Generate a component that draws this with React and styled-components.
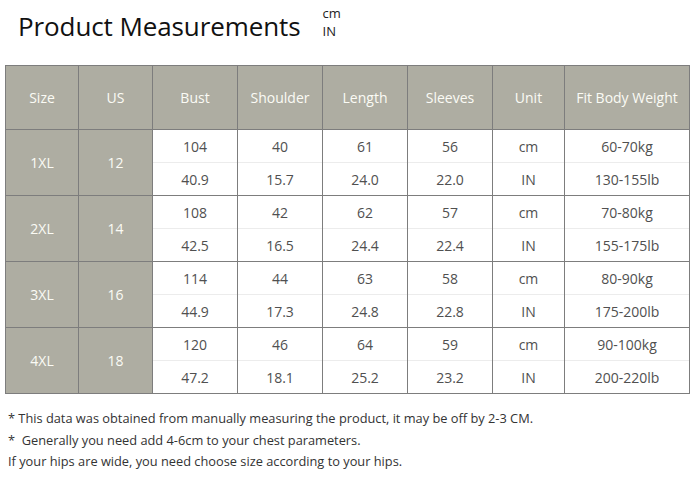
import React from 'react'
import styled, { createGlobalStyle } from 'styled-components'

const GlobalStyle = createGlobalStyle`
  html, body { margin: 0; padding: 0; background: #fff; }
  body { font-family: "Open Sans", "Noto Sans", sans-serif; }
`

const COLS = [73, 74, 85, 85, 85, 85, 72, 125]
const HEADERS = ['Size', 'US', 'Bust', 'Shoulder', 'Length', 'Sleeves', 'Unit', 'Fit Body Weight']

const ROWS = [
  { size: '1XL', us: '12', cm: ['104', '40', '61', '56', 'cm', '60-70kg'], inch: ['40.9', '15.7', '24.0', '22.0', 'IN', '130-155lb'] },
  { size: '2XL', us: '14', cm: ['108', '42', '62', '57', 'cm', '70-80kg'], inch: ['42.5', '16.5', '24.4', '22.4', 'IN', '155-175lb'] },
  { size: '3XL', us: '16', cm: ['114', '44', '63', '58', 'cm', '80-90kg'], inch: ['44.9', '17.3', '24.8', '22.8', 'IN', '175-200lb'] },
  { size: '4XL', us: '18', cm: ['120', '46', '64', '59', 'cm', '90-100kg'], inch: ['47.2', '18.1', '25.2', '23.2', 'IN', '200-220lb'] },
]

function SizeChart() {
  return (
    <Page>
      <GlobalStyle />
      <TitleBar>
        <Title>Product Measurements</Title>
        <Units>
          <span>cm</span>
          <span>IN</span>
        </Units>
      </TitleBar>
      <Table>
        <colgroup>
          {COLS.map((w, i) => <col key={i} style={{ width: w }} />)}
        </colgroup>
        <thead>
          <tr>
            {HEADERS.map(h => <Head key={h}>{h}</Head>)}
          </tr>
        </thead>
        <tbody>
          {ROWS.map(r => (
            <React.Fragment key={r.size}>
              <tr>
                <Label rowSpan={2}>{r.size}</Label>
                <Label rowSpan={2}>{r.us}</Label>
                {r.cm.map((v, i) => <Cell key={i} top>{v}</Cell>)}
              </tr>
              <tr>
                {r.inch.map((v, i) => <Cell key={i}>{v}</Cell>)}
              </tr>
            </React.Fragment>
          ))}
        </tbody>
      </Table>
      <Notes>
        <p>* This data was obtained from manually measuring the product, it may be off by 2-3 CM.</p>
        <p>*&nbsp; Generally you need add 4-6cm to your chest parameters.</p>
        <p>If your hips are wide, you need choose size according to your hips.</p>
      </Notes>
    </Page>
  )
}

const Page = styled.div`
  width: 692px;
  height: 477px;
  overflow: hidden;
`

const TitleBar = styled.div`
  display: flex;
  align-items: flex-start;
  padding: 6px 0 0 18px;
  height: 65px;
  box-sizing: border-box;
`

const Title = styled.h1`
  margin: 0;
  font-size: 26px;
  font-weight: 500;
  color: #111;
  line-height: 40px;
  letter-spacing: -0.1px;
`

const Units = styled.div`
  display: flex;
  flex-direction: column;
  margin: -2px 0 0 22px;
  font-size: 13px;
  line-height: 18px;
  color: #222;
`

const Table = styled.table`
  margin-left: 5px;
  width: 684px;
  table-layout: fixed;
  border-collapse: collapse;
  border: 1px solid #7d7d7d;
`

const Head = styled.th`
  height: 63px;
  padding: 0;
  background: #aeada2;
  color: #fbfbf5;
  font-weight: 400;
  font-size: 14px;
  border: 1px solid #7d7d7d;
`

const Label = styled.td`
  padding: 0;
  background: #aeada2;
  color: #fbfbf5;
  font-size: 14px;
  text-align: center;
  border: 1px solid #7d7d7d;
`

const Cell = styled.td`
  height: 32px;
  padding: 0;
  text-align: center;
  font-size: 14px;
  color: #505050;
  border-left: 1px solid #7d7d7d;
  border-right: 1px solid #7d7d7d;
  border-top: 1px solid ${p => (p.top ? '#7d7d7d' : '#ececec')};
`

const Notes = styled.div`
  padding: 14px 0 0 8px;
  font-size: 12.8px;
  color: #333;
  p {
    margin: 0;
    line-height: 21.5px;
  }
`

export default SizeChart
